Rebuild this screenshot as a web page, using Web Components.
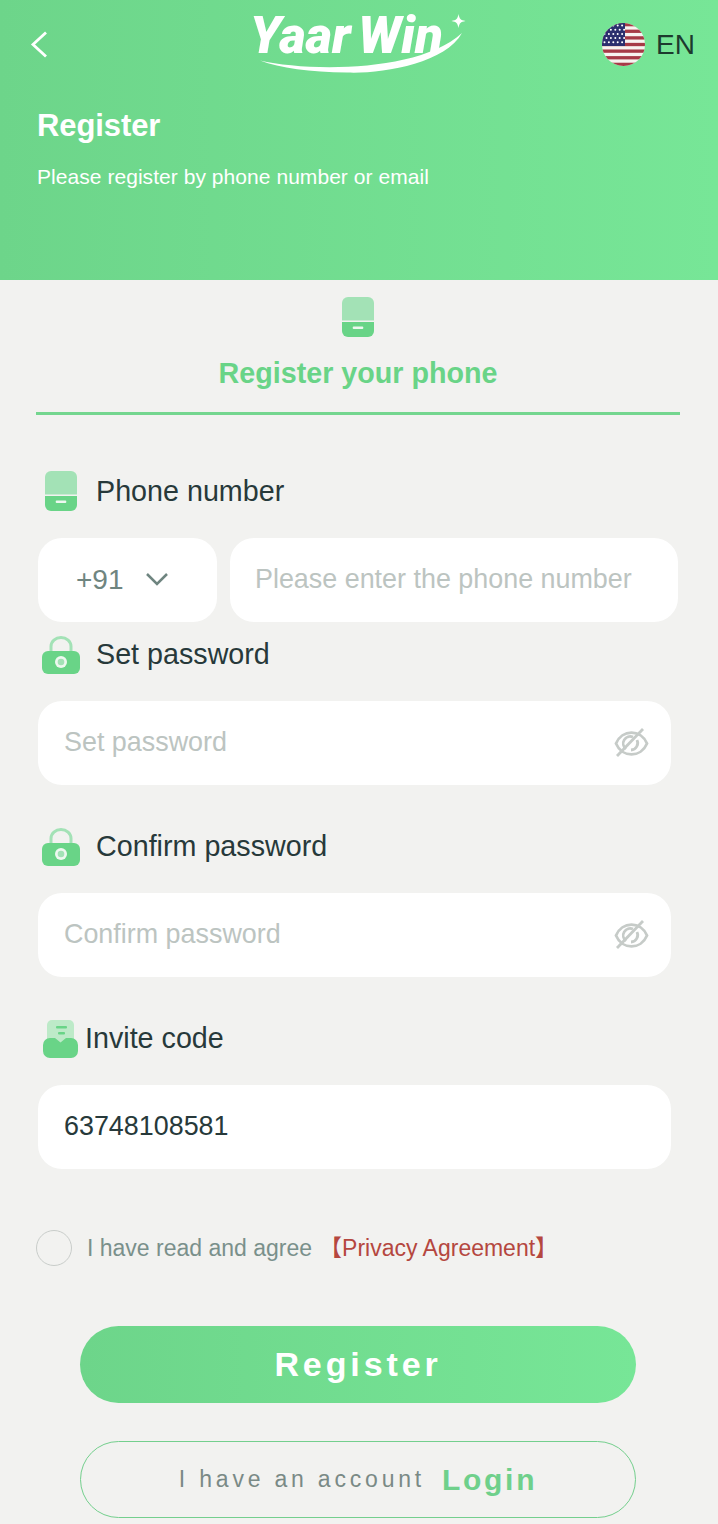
<!DOCTYPE html>
<html lang="en">
<head>
<meta charset="utf-8">
<title>Register</title>
<style>
  html, body { margin: 0; padding: 0; background: #f2f2f0; }
  body { font-family: "Liberation Sans", Arial, sans-serif; width: 718px; height: 1524px; overflow: hidden; }
</style>
</head>
<body>
<reg-page>
  <top-bar slot="top"></top-bar>
  <phone-tab></phone-tab>
  <form-field label="Phone number" icon="phone" first>
    <div class="phone-row" style="display:flex;gap:13px;width:640px">
      <code-box></code-box>
      <text-box placeholder="Please enter the phone number" grow pad="25"></text-box>
    </div>
  </form-field>
  <form-field label="Set password" icon="lock" near>
    <text-box placeholder="Set password" eye></text-box>
  </form-field>
  <form-field label="Confirm password" icon="lock">
    <text-box placeholder="Confirm password" eye></text-box>
  </form-field>
  <form-field label="Invite code" icon="invite">
    <text-box value="63748108581"></text-box>
  </form-field>
  <agree-row></agree-row>
  <pill-button kind="solid">Register</pill-button>
  <pill-button kind="ghost">I have an account<b slot="link">Login</b></pill-button>
</reg-page>

<script>
const ICONS = {
  phone: `<svg width="32" height="40" viewBox="0 0 32 40" style="margin-left:7px;margin-right:19px">
    <path d="M6 0h20a6 6 0 0 1 6 6v17.500H0V6a6 6 0 0 1 6-6z" fill="#a3e2b6"/>
    <path d="M0 25h32v9a6 6 0 0 1-6 6H6a6 6 0 0 1-6-6z" fill="#69d487"/>
    <rect x="10.700" y="29.500" width="10.600" height="2.600" rx="1" fill="#eef8f0"/>
  </svg>`,
  lock: `<svg width="38" height="38" viewBox="0 0 38 38" style="margin-left:4px;margin-right:16px">
    <path d="M9 17V10.500a10 9 0 0 1 20 0V17" fill="none" stroke="#a3e2b6" stroke-width="3"/>
    <rect x="0" y="15" width="38" height="23" rx="6" fill="#69d487"/>
    <circle cx="19" cy="26" r="6" fill="#eef8f0"/>
    <circle cx="19" cy="26" r="3.300" fill="#a3e2b6"/>
  </svg>`,
  invite: `<svg width="35" height="38" viewBox="0 0 35 38" style="margin-left:5px;margin-right:7px">
    <rect x="4" y="0" width="27" height="28" rx="5" fill="#bdeac8"/>
    <rect x="13" y="6" width="11" height="2.600" rx="1" fill="#69d487"/>
    <rect x="15" y="12" width="7" height="2.600" rx="1" fill="#69d487"/>
    <path d="M7 18h5l5.500 4.500L23 18h5a7 7 0 0 1 7 7v6a7 7 0 0 1-7 7H7a7 7 0 0 1-7-7v-6a7 7 0 0 1 7-7z" fill="#69d487"/>
  </svg>`
}

class topBar extends HTMLElement{
  constructor(){
    super()
    this.attachShadow({mode: "open"})
  }
  connectedCallback(){
    let stripes = ""
    for(let i = 0; i < 7; i++){
      stripes += `<rect x="0" y="${i * 6.62}" width="43" height="3.310" fill="#a63a46"/>`
    }
    let stars = ""
    for(let r = 0; r < 5; r++){
      for(let c = 0; c < 5; c++){
        stars += `<circle cx="${2.5 + c * 4.4 + (r % 2) * 2}" cy="${2.5 + r * 4.2}" r="1" fill="#fff"/>`
      }
    }
    this.shadowRoot.innerHTML = `
    <style>
      :host{
        display: block;
        height: 280px;
        box-sizing: border-box;
        padding: 0 23px 0 37px;
        background: linear-gradient(90deg, #6dd58a 0%, #77e697 100%);
        color: #fff;
      }
      .bar{ display: flex; align-items: flex-start; height: 100px; }
      .back{ margin: 30px 0 0 -8px; }
      .logo{ position: relative; width: 216px; height: 76px; margin: 6px 0 0 201px; font: italic 900 51px/1 Roboto, "Liberation Sans", sans-serif; letter-spacing: 0; word-spacing: -5px; white-space: nowrap; }
      .logo span{ display: block; padding-top: 4px; }
      .logo svg{ position: absolute; left: 0; top: 0; }
      .lang{ display: flex; align-items: center; gap: 11px; margin: 23px 0 0 auto; font-size: 28px; color: #1d3a2e; }
      h1{ margin: 8px 0 0; font-size: 31px; line-height: 36px; font-weight: 700; letter-spacing: -0.1px; }
      p{ margin: 21px 0 0; font-size: 21px; line-height: 24px; letter-spacing: 0.05px; }
    </style>
    <div class="bar">
      <svg class="back" width="20" height="30" viewBox="0 0 20 30"><path d="M17 2.500 4 14.500 17 26.500" fill="none" stroke="#fff" stroke-width="2.800"/></svg>
      <div class="logo"><span>Yaar Win</span>
        <svg width="216" height="76" viewBox="0 0 216 76">
          <path d="M10 54.500C60 66 170 66 212 27C195 58 130 68 97 66.500C60 66 30 62 10 54.500z" fill="#fff"/>
          <path d="M208.500 8c1 5 2 6 7 7c-5 1-6 2-7 7c-1-5-2-6-7-7c5-1 6-2 7-7z" fill="#fff"/>
        </svg>
      </div>
      <div class="lang">
        <svg width="43" height="43" viewBox="0 0 43 43">
          <defs><clipPath id="c"><circle cx="21.500" cy="21.500" r="21.500"/></clipPath></defs>
          <g clip-path="url(#c)">
            <rect width="43" height="43" fill="#f7f3f0"/>
            ${stripes}
            <rect width="23" height="23" fill="#2b2f6e"/>
            ${stars}
          </g>
        </svg>
        <span>EN</span>
      </div>
    </div>
    <h1>Register</h1>
    <p>Please register by phone number or email</p>
    `
  }
}

class phoneTab extends HTMLElement{
  constructor(){
    super()
    this.attachShadow({mode: "open"})
  }
  connectedCallback(){
    this.shadowRoot.innerHTML = `
    <style>
      :host{
        display: flex;
        flex-direction: column;
        align-items: center;
        width: 644px;
        margin-left: 36px;
        padding-top: 17px;
        height: 115px;
        border-bottom: 3px solid #74d68f;
        color: #69d487;
      }
      svg{ display: block; }
      span{ font-size: 28.700px; line-height: 34px; font-weight: 700; margin-top: 19px; }
    </style>
    ${ICONS.phone.replace('style="margin-left:7px;margin-right:19px"', '')}
    <span>Register your phone</span>
    `
  }
}

class formField extends HTMLElement{
  constructor(){
    super()
    this.attachShadow({mode: "open"})
  }
  connectedCallback(){
    const icon = this.getAttribute("icon")
    const label = this.getAttribute("label")
    this.shadowRoot.innerHTML = `
    <style>
      :host{ display: block; margin: 43px 0 0 38px; }
      :host([first]){ margin-top: 56px; }
      :host([near]){ margin-top: 14px; }
      .label{ display: flex; align-items: center; margin-bottom: 27px; font-size: 28.700px; line-height: 34px; color: #27393a; }
      :host(:not([first])) span{ margin-top: -2px; }
      svg{ display: block; flex: none; }
    </style>
    <div class="label">${ICONS[icon]}<span>${label}</span></div>
    <slot></slot>
    `
  }
}

class textBox extends HTMLElement{
  constructor(){
    super()
    this.attachShadow({mode: "open"})
  }
  connectedCallback(){
    const value = this.getAttribute("value")
    const text = value || this.getAttribute("placeholder")
    const eye = this.hasAttribute("eye") ? `
      <svg width="36" height="32" viewBox="0 0 36 32" fill="none" stroke="#c6cbc8" stroke-width="2.800">
        <path d="M3 15.500C9 1 28 1 34 15.500C28 30 9 30 3 15.500z"/>
        <path d="M13 21a7 7 0 0 1 7-12"/>
        <path d="M24 12a7 7 0 0 1-6 10"/>
        <path d="M30 1 4 28"/>
      </svg>` : ""
    this.shadowRoot.innerHTML = `
    <style>
      :host{
        display: flex;
        align-items: center;
        justify-content: space-between;
        box-sizing: border-box;
        width: 633px;
        height: 84px;
        padding: 0 22px 0 ${this.getAttribute("pad") || 26}px;
        background: #fff;
        border-radius: 24px;
        font-size: 26.900px;
        color: ${value ? "#27393a" : "#bcc4c1"};
      }
      :host([grow]){ flex: 1; width: auto; }
      span{ margin-top: -2px; }
      svg{ display: block; margin-top: 2px; }
    </style>
    <span>${text}</span>${eye}
    `
  }
}

class codeBox extends HTMLElement{
  constructor(){
    super()
    this.attachShadow({mode: "open"})
  }
  connectedCallback(){
    this.shadowRoot.innerHTML = `
    <style>
      :host{
        display: flex;
        align-items: center;
        flex: none;
        box-sizing: border-box;
        width: 179px;
        height: 84px;
        padding-left: 38px;
        gap: 21px;
        background: #fff;
        border-radius: 24px;
        font-size: 28px;
        color: #6f8580;
      }
      svg{ display: block; margin-top: -3px; }
    </style>
    <span>+91</span>
    <svg width="24" height="14" viewBox="0 0 24 14"><path d="M2 2 12 12 22 2" fill="none" stroke="#6f8580" stroke-width="2.500"/></svg>
    `
  }
}

class agreeRow extends HTMLElement{
  constructor(){
    super()
    this.attachShadow({mode: "open"})
  }
  connectedCallback(){
    this.shadowRoot.innerHTML = `
    <style>
      :host{
        display: flex;
        align-items: center;
        height: 36px;
        margin: 61px 0 0 36px;
        font-size: 23px;
        line-height: 36px;
        color: #7a908b;
        white-space: nowrap;
      }
      i{ box-sizing: border-box; flex: none; width: 36px; height: 36px; margin-right: 15px; border: 1px solid #c9cdca; border-radius: 50%; }
      div{ height: 36px; }
      span{ color: #b5473f; margin-left: 7px; font-family: "Liberation Sans", "Noto Sans CJK SC", sans-serif; line-height: 0; }
    </style>
    <i></i><div>I have read and agree<span>【Privacy Agreement】</span></div>
    `
  }
}

class pillButton extends HTMLElement{
  constructor(){
    super()
    this.attachShadow({mode: "open"})
  }
  connectedCallback(){
    this.shadowRoot.innerHTML = `
    <style>
      :host{
        display: flex;
        align-items: center;
        justify-content: center;
        box-sizing: border-box;
        width: 556px;
        height: 77px;
        margin: 38px 0 0 80px;
        border-radius: 39px;
      }
      :host([kind="solid"]){
        margin-top: 60px;
        background: linear-gradient(90deg, #6dd58a 0%, #77e697 100%);
        color: #fff;
        font-size: 34px;
        font-weight: 700;
        letter-spacing: 3.900px;
      }
      :host([kind="ghost"]){
        border: 1px solid #74cf8d;
        color: #7a8a86;
        font-size: 23px;
        letter-spacing: 3.800px;
      }
      ::slotted(b){ margin-left: 17px; color: #6fd08b; font-size: 30px; letter-spacing: 2.700px; }
    </style>
    <slot></slot><slot name="link"></slot>
    `
  }
}

class regPage extends HTMLElement{
  constructor(){
    super()
    this.attachShadow({mode: "open"})
  }
  connectedCallback(){
    this.shadowRoot.innerHTML = `
    <style>
      :host{ display: block; width: 718px; }
    </style>
    <slot name="top"></slot>
    <slot></slot>
    `
  }
}

customElements.define("top-bar", topBar)
customElements.define("phone-tab", phoneTab)
customElements.define("form-field", formField)
customElements.define("text-box", textBox)
customElements.define("code-box", codeBox)
customElements.define("agree-row", agreeRow)
customElements.define("pill-button", pillButton)
customElements.define("reg-page", regPage)
</script>
</body>
</html>
